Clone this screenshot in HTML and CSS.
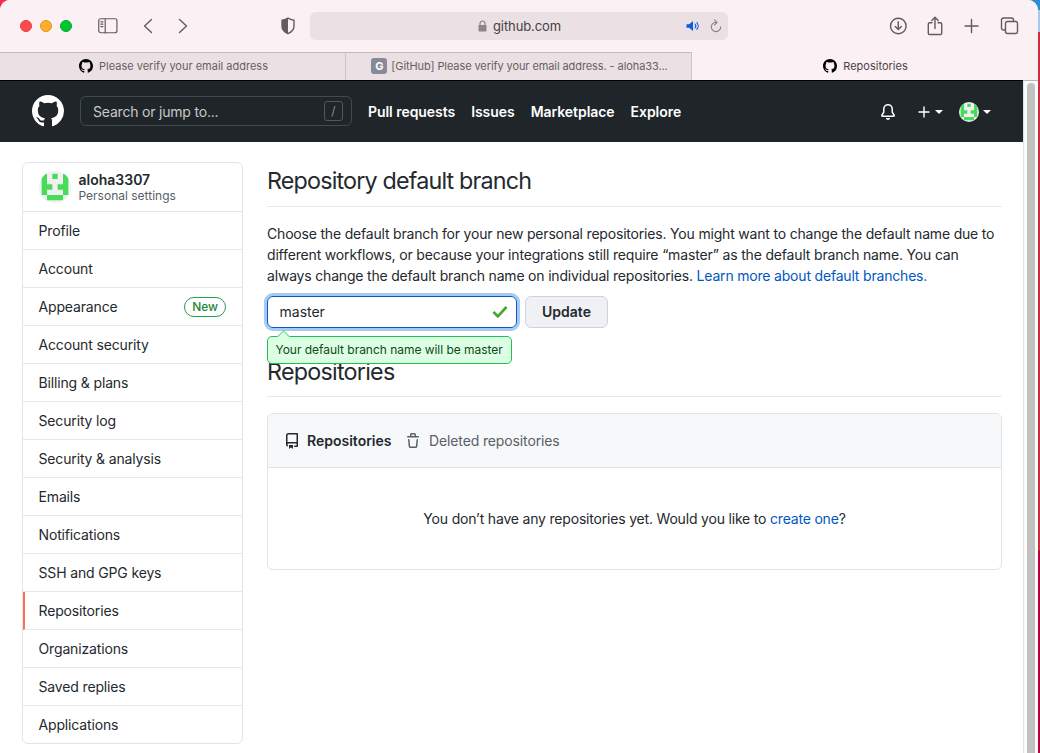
FILE: index.html
```html
<!DOCTYPE html>
<html lang="en">
<head>
<meta charset="utf-8">
<title>Repositories</title>
<link rel="stylesheet" href="styles.css">
</head>
<body>
<svg class="defs" aria-hidden="true">
  <symbol id="mark" viewBox="0 0 16 16"><path fill-rule="evenodd" d="M8 0C3.58 0 0 3.58 0 8c0 3.54 2.29 6.53 5.47 7.59.4.07.55-.17.55-.38 0-.19-.01-.82-.01-1.49-2.01.37-2.53-.49-2.69-.94-.09-.23-.48-.94-.82-1.13-.28-.15-.68-.52-.01-.53.63-.01 1.08.58 1.23.82.72 1.21 1.87.87 2.33.66.07-.52.28-.87.51-1.07-1.78-.2-3.64-.89-3.64-3.95 0-.87.31-1.59.82-2.15-.08-.2-.36-1.02.08-2.12 0 0 .67-.21 2.2.82.64-.18 1.32-.27 2-.27s1.36.09 2 .27c1.53-1.04 2.2-.82 2.2-.82.44 1.1.16 1.92.08 2.12.51.56.82 1.27.82 2.15 0 3.07-1.87 3.75-3.65 3.95.29.25.54.73.54 1.48 0 1.07-.01 1.93-.01 2.2 0 .21.15.46.55.38A8.01 8.01 0 0 0 16 8c0-4.42-3.58-8-8-8z"/></symbol>
  <symbol id="identicon" viewBox="0 0 6 6"><rect width="6" height="6" fill="#f0f0f0"/><path fill="#46db58" d="M.5.500h1v2h1v1h-1v1h-1zM5.500.500h-1v2h-1v1h1v1h1zM2.500.500h1v1h-1zM1.500 4.500h3v1h-3z"/></symbol>
</svg>
<div class="window">
  <div class="toolbar">
    <div class="tools-left">
      <span class="light red"></span><span class="light amber"></span><span class="light green"></span>
      <svg class="sidebar-icon" width="20" height="16" viewBox="0 0 20 16"><rect x=".75" y=".75" width="18.200" height="14" rx="2"/><path d="M7.200 1v14M2.900 3.800h2M2.900 6.200h2M2.900 8.600h2"/></svg>
      <svg class="back" width="10" height="16" viewBox="0 0 10 16"><path d="M8.500 1.500 1.500 8l7 6.500"/></svg>
      <svg class="forward" width="10" height="16" viewBox="0 0 10 16"><path d="m1.500 1.500 7 6.500-7 6.500"/></svg>
    </div>
    <svg class="shield" width="16" height="18" viewBox="0 0 16 18"><path d="M8 1.200c2 1.300 4 1.700 6 2v6c0 3.500-2.500 5.700-6 7.500-3.500-1.800-6-4-6-7.500v-6c2-.3 4-.7 6-2z"/><path class="solid" d="M8 1.200v15.500c-3.500-1.800-6-4-6-7.500v-6c2-.3 4-.7 6-2z"/></svg>
    <div class="address">
      <svg class="lock" width="9" height="12" viewBox="0 0 9 12"><rect x=".5" y="5" width="8" height="6.500" rx="1"/><path d="M2 5V3.500a2.500 2.500 0 0 1 5 0V5"/></svg>
      <span class="host">github.com</span>
      <svg class="sound" width="15" height="12" viewBox="0 0 15 12"><path class="cone" d="M.5 4.200v3.600h2.700L7 11V1L3.200 4.200z"/><path d="M9 4a3 3 0 0 1 0 4M10.800 2.600a5 5 0 0 1 0 6.800"/></svg>
      <svg class="reload" width="12" height="14" viewBox="0 0 12 14"><path d="M6.400 3.200H6a4.700 4.700 0 1 0 4.700 4.700M4.500.8l2.600 2.500-2.600 2.500"/></svg>
    </div>
    <div class="tools-right">
      <svg width="18" height="18" viewBox="0 0 18 18"><circle cx="9.300" cy="9" r="7.800"/><path d="M9.300 4.800v7.500M6.300 9.600l3 3 3-3"/></svg>
      <svg class="share" width="16" height="20" viewBox="0 0 16 20"><path d="M5 6.800H2.600A1.300 1.300 0 0 0 1.300 8v9.200c0 .8.500 1.300 1.300 1.300h10.800c.8 0 1.300-.5 1.300-1.300V8c0-.7-.5-1.200-1.300-1.200H11M8 12.500V1.500M4.800 4.500 8 1.300l3.200 3.200"/></svg>
      <svg width="14" height="14" viewBox="0 0 14 14"><path d="M6.500.5v13M0 7h13"/></svg>
      <svg width="18" height="18" viewBox="0 0 18 18"><rect x="5.500" y="4.500" width="12" height="12" rx="2"/><path d="M5.300 13H3.500a2 2 0 0 1-2-2V3a2 2 0 0 1 2-2h8a2 2 0 0 1 2 2v1.300"/></svg>
    </div>
  </div>
  <div class="tabs">
    <div class="tab"><svg class="tab-mark"><use href="#mark"/></svg><span class="t1">Please verify your email address</span></div>
    <div class="tab second"><span class="g-icon">G</span><span class="t2">[GitHub] Please verify your email address. - aloha33...</span></div>
    <div class="tab current"><svg class="tab-mark"><use href="#mark"/></svg><span class="t3">Repositories</span></div>
  </div>
  <div class="viewport">
    <div class="page">
      <header class="header">
        <svg class="logo"><use href="#mark"/></svg>
        <div class="search"><span>Search or jump to...</span><kbd>/</kbd></div>
        <nav class="nav"><a>Pull requests</a><a>Issues</a><a>Marketplace</a><a>Explore</a></nav>
        <div class="account">
          <svg class="bell" width="16" height="16" viewBox="0 0 16 16"><path d="M8 16a2 2 0 0 0 1.985-1.750c.017-.137-.097-.25-.235-.25h-3.500c-.138 0-.252.113-.235.250A2 2 0 0 0 8 16z"/><path fill-rule="evenodd" d="M8 1.500A3.500 3.500 0 0 0 4.500 5v2.947c0 .346-.102.683-.294.970l-1.703 2.556a.018.018 0 0 0-.003.010l.001.006c0 .002.002.004.004.006a.017.017 0 0 0 .006.004l.007.001h10.964l.007-.001a.016.016 0 0 0 .006-.004.016.016 0 0 0 .004-.006l.001-.007a.017.017 0 0 0-.003-.010l-1.703-2.554a1.750 1.750 0 0 1-.294-.970V5A3.500 3.500 0 0 0 8 1.500zM3 5a5 5 0 0 1 10 0v2.947c0 .050.015.098.042.139l1.703 2.555A1.518 1.518 0 0 1 13.482 13H2.518a1.518 1.518 0 0 1-1.263-2.360l1.703-2.554A.25.25 0 0 0 3 7.947V5z"/></svg>
          <svg class="plus" width="12" height="12" viewBox="0 0 12 12"><path d="M6 .5v11M.5 6h11"/></svg>
          <span class="caret"></span>
          <svg class="avatar-small"><use href="#identicon"/></svg>
          <span class="caret last"></span>
        </div>
      </header>
      <div class="content">
        <nav class="menu">
          <div class="profile"><svg class="avatar"><use href="#identicon"/></svg><div><strong>aloha3307</strong><span>Personal settings</span></div></div>
          <a><span>Profile</span></a>
          <a><span>Account</span></a>
          <a><span>Appearance</span><em>New</em></a>
          <a><span>Account security</span></a>
          <a><span>Billing &amp; plans</span></a>
          <a><span>Security log</span></a>
          <a><span>Security &amp; analysis</span></a>
          <a><span>Emails</span></a>
          <a><span>Notifications</span></a>
          <a><span>SSH and GPG keys</span></a>
          <a class="selected"><span>Repositories</span></a>
          <a><span>Organizations</span></a>
          <a><span>Saved replies</span></a>
          <a><span>Applications</span></a>
        </nav>
        <main class="main">
          <h2 class="h-branch">Repository default branch</h2>
          <p class="intro">Choose the default branch for your new personal repositories. You might want to change the default name due to<br><span class="l2">different workflows, or because your integrations still require “master” as the default branch name. You can</span><br>always change the default branch name on individual repositories. <a>Learn more about default branches.</a></p>
          <div class="form">
            <div class="field"><span>master</span><svg width="16" height="14" viewBox="0 0 16 14"><path d="m1.500 7 4.300 4.300 8.700-9.300"/></svg>
              <div class="tip">Your default branch name will be master</div>
            </div>
            <button class="update">Update</button>
          </div>
          <h2 class="h-repos">Repositories</h2>
          <section class="box">
            <div class="box-head">
              <svg width="16" height="16" viewBox="0 0 16 16"><path fill-rule="evenodd" d="M2 2.500A2.500 2.500 0 0 1 4.500 0h8.750a.75.75 0 0 1 .75.750v12.500a.75.75 0 0 1-.75.750h-2.500a.75.75 0 1 1 0-1.500h1.750v-2h-8a1 1 0 0 0-.714 1.700.75.75 0 0 1-1.072 1.050A2.495 2.495 0 0 1 2 11.500v-9zm10.500-1V9h-8c-.356 0-.694.074-1 .208V2.500a1 1 0 0 1 1-1h8zM5 12.250v3.250a.25.25 0 0 0 .400.200l1.450-1.087a.25.25 0 0 1 .300 0L8.600 15.700a.25.25 0 0 0 .400-.200v-3.250a.25.25 0 0 0-.250-.250h-3.500a.25.25 0 0 0-.250.250z"/></svg>
              <b>Repositories</b>
              <svg class="trash" width="16" height="16" viewBox="0 0 16 16"><path fill-rule="evenodd" d="M6.500 1.750a.25.25 0 0 1 .250-.250h2.500a.25.25 0 0 1 .250.250V3h-3V1.750zm4.500 0V3h2.250a.75.75 0 0 1 0 1.500H2.750a.75.75 0 0 1 0-1.500H5V1.750C5 .784 5.784 0 6.750 0h2.500C10.216 0 11 .784 11 1.750zM4.496 6.675a.75.75 0 1 0-1.492.150l.660 6.600A1.750 1.750 0 0 0 5.405 15h5.190c.9 0 1.652-.681 1.741-1.576l.660-6.600a.75.75 0 0 0-1.492-.149l-.660 6.600a.25.25 0 0 1-.249.225h-5.190a.25.25 0 0 1-.249-.225l-.660-6.600z"/></svg>
              <span class="deleted">Deleted repositories</span>
            </div>
            <div class="blank"><span>You don’t have any repositories yet. Would you like to <a>create one</a>?</span></div>
          </section>
        </main>
      </div>
    </div>
    <div class="scroll"><div class="thumb"></div></div>
  </div>
</div>
</body>
</html>
```

FILE: styles.css
```css
* { box-sizing: border-box; }
body {
  margin: 0;
  height: 753px;
  overflow: hidden;
  background: linear-gradient(90deg, #f2304f 0 50%, transparent 50%), linear-gradient(#2a8fd0 0 10px, #a9c9ea 10px 32px, #c9303f 32px 550px, #b90042 551px);
  font: 14px/21px Inter, "Liberation Sans", sans-serif;
  color: #24292e;
}
svg { display: block; flex: none; overflow: visible; }
.defs { position: absolute; width: 0; height: 0; }
.window { width: 1038px; height: 753px; background: #fff; border-radius: 10px 10px 0 0; overflow: hidden; }

.toolbar { height: 52px; background: #fbf0f4; display: flex; align-items: center; color: #655a5e; }
.toolbar svg { fill: none; stroke: #655a5e; stroke-width: 1.4; stroke-linecap: round; stroke-linejoin: round; }
.tools-left { display: flex; align-items: center; width: 280px; padding-left: 20px; }
.light { width: 12px; height: 12px; border-radius: 50%; margin-right: 8px; border: 1px solid; }
.red { background: #ff4a4b; border-color: #e33c40; }
.amber { background: #ffae28; border-color: #df951f; }
.green { background: #00c72f; border-color: #00ab27; }
.toolbar .sidebar-icon { margin-left: 18px; margin-right: 25px; stroke-width: 1.2; }
.forward { margin-left: 25px; }
.back, .forward { stroke-width: 1.6; }
.shield { margin-right: 14px; }
.toolbar .shield .solid { fill: #655a5e; stroke: none; }
.address { width: 418px; height: 28px; border-radius: 6px; background: #ebe1e5; display: flex; align-items: center; padding-left: 168px; }
.toolbar .lock { stroke: #8e8589; stroke-width: 1.2; }
.lock rect { fill: #8e8589; stroke: none; }
.host { font-size: 13px; color: #463f42; margin-left: 6px; width: 193px; letter-spacing: -.1px; }
.toolbar .sound { stroke: #0a5de0; stroke-width: 1.1; }
.sound .cone { fill: #0a5de0; stroke: none; }
.toolbar .reload { stroke: #8a8084; stroke-width: 1.1; margin-left: 9px; }
.tools-right { display: flex; align-items: center; gap: 21px; margin-left: 161px; }
.share { margin: 0 1px 0 -1px; }

.tabs { height: 28px; display: flex; background: #ebe1e5; font-size: 11px; line-height: 14px; color: #685e62; }
.tab { width: 346px; display: flex; align-items: center; justify-content: center; border-top: 1px solid #c4babe; border-right: 1px solid #d0c6ca; padding: 0 0 1px 2px; }
.tab.current { background: #fbf0f4; border-color: #fbf0f4; color: #4c4347; }
.t2 { letter-spacing: -.09px; }
.tab-mark { width: 14px; height: 14px; margin-right: 6px; fill: #000; }
.g-icon { width: 16px; height: 16px; border-radius: 3px; background: #868a99; color: #fff; font-weight: 700; line-height: 16px; text-align: center; margin-right: 4px; }

.viewport { display: flex; height: 673px; }
.page { width: 1023px; }
.header { height: 62px; background: #202529; border-top: 1px solid #000; display: flex; align-items: center; padding: 0 32px; color: #fff; }
.logo { width: 32px; height: 32px; fill: #fff; margin: 0 16px 2px 0; }
.search { width: 272px; height: 30px; border: 1px solid #404a51; border-radius: 6px; display: flex; align-items: center; justify-content: space-between; padding: 0 8px 0 12px; color: #c6c9cb; margin-bottom: 2px; }
.search span { letter-spacing: -.2px; padding-top: 1px; }
kbd { width: 19px; height: 20px; border: 1px solid #50585e; border-radius: 3px; font: 12px/18px Inter, sans-serif; text-align: center; color: #858c91; }
.nav { display: flex; gap: 16px; margin-left: 16px; font-weight: 600; letter-spacing: -.05px; }
.account { display: flex; align-items: center; margin-left: auto; }
.bell { fill: #fff; margin-right: 22px; }
.plus { stroke: #fff; stroke-width: 1.4; }
.caret { border: 4px solid transparent; border-top-color: #fff; border-bottom: 0; margin-left: 5px; }
.avatar-small { width: 20px; height: 20px; border-radius: 50%; margin-left: 16px; overflow: hidden; }
.last { margin-left: 4px; }

.content { display: flex; align-items: flex-start; padding: 20px 21px 0 22px; }
.menu { width: 221px; border: 1px solid #e1e4e8; border-radius: 6px; margin-right: 24px; overflow: hidden; letter-spacing: -.15px; }
.profile { height: 49px; display: flex; padding: 8px 16px; border-bottom: 1px solid #e1e4e8; letter-spacing: 0; }
.avatar { width: 32px; height: 32px; border-radius: 50%; margin-right: 7.500px; overflow: hidden; }
.profile strong, .profile div span { display: block; }
.profile strong { font-weight: 600; line-height: 17px; }
.profile div span { color: #586069; font-size: 12px; line-height: 15px; }
.menu a { height: 38px; display: flex; align-items: center; justify-content: space-between; padding: 0 16px 0 15.500px; border-bottom: 1px solid #e6e8eb; }
.menu a:last-child { border-bottom: 0; height: 37px; }
.menu .selected { border-left: 2px solid #f9705c; padding-left: 13.500px; }
.menu em { font-style: normal; font-size: 12px; line-height: 18px; font-weight: 500; letter-spacing: 0; color: #22863a; border: 1px solid #22a04a; border-radius: 10px; padding: 0 7px; }

.main { width: 735px; }
h2 { margin: 0; font-size: 23.300px; line-height: 38px; font-weight: 400; letter-spacing: -.82px; border-bottom: 1px solid #e6e8eb; white-space: nowrap; }
.h-branch { height: 45px; }
.intro { margin: 16px 0 10px; white-space: nowrap; letter-spacing: -.188px; }
.l2 { letter-spacing: -.17px; }
.main a { color: #0057c2; }
.form { display: flex; gap: 8px; }
.field { position: relative; width: 250px; height: 32px; border: 1px solid #0b58c8; border-radius: 6px; box-shadow: 0 0 0 3px #a8caf0; display: flex; align-items: center; justify-content: space-between; padding: 0 8px 0 11.500px; }
.field > span { padding-bottom: 2px; }
.field svg { fill: none; stroke: #45a62d; stroke-width: 2.600; }
.tip { position: absolute; left: -1px; top: 39px; width: 245px; height: 28px; padding: 0 7.500px; border: 1px solid #20c052; border-radius: 5px; background: #dcffe4; color: #144620; font-size: 12px; line-height: 26px; letter-spacing: -.03px; white-space: nowrap; }
.tip::before { content: ""; position: absolute; left: 11px; top: -5px; width: 8px; height: 8px; background: #dcffe4; border: solid #60d582; border-width: 1px 0 0 1px; transform: rotate(45deg); }
.update { width: 83px; height: 32px; border: 1px solid #d2d3d8; border-radius: 6px; background: #f0f1f5; color: #24292e; font: 600 14px/20px Inter, sans-serif; padding: 0; }
.h-repos { height: 44px; margin-top: 25px; line-height: 37px; letter-spacing: -.75px; }
.box { height: 157px; margin-top: 16px; border: 1px solid #dfe2e6; border-radius: 6px; overflow: hidden; }
.box-head { height: 54px; padding: 0 16px; display: flex; align-items: center; background: #f6f8fa; border-bottom: 1px solid #dfe2e6; }
.box-head svg { fill: #24292e; }
.box-head b { font-weight: 600; margin-left: 7px; }
.box-head .trash { margin-left: 13.500px; margin-right: 8px; fill: #586069; }
.deleted { color: #586069; letter-spacing: -.13px; }
.blank { height: 101px; display: flex; align-items: center; justify-content: center; white-space: nowrap; letter-spacing: -.19px; }

.scroll { width: 15px; height: 673px; background: #fafafa; border-top: 1px solid #bcb4b8; border-left: 1px solid #e2e2e2; padding: 2px 3px 0; }
.thumb { width: 8px; height: 680px; border-radius: 4px; background: #c1c1c1; }
```
